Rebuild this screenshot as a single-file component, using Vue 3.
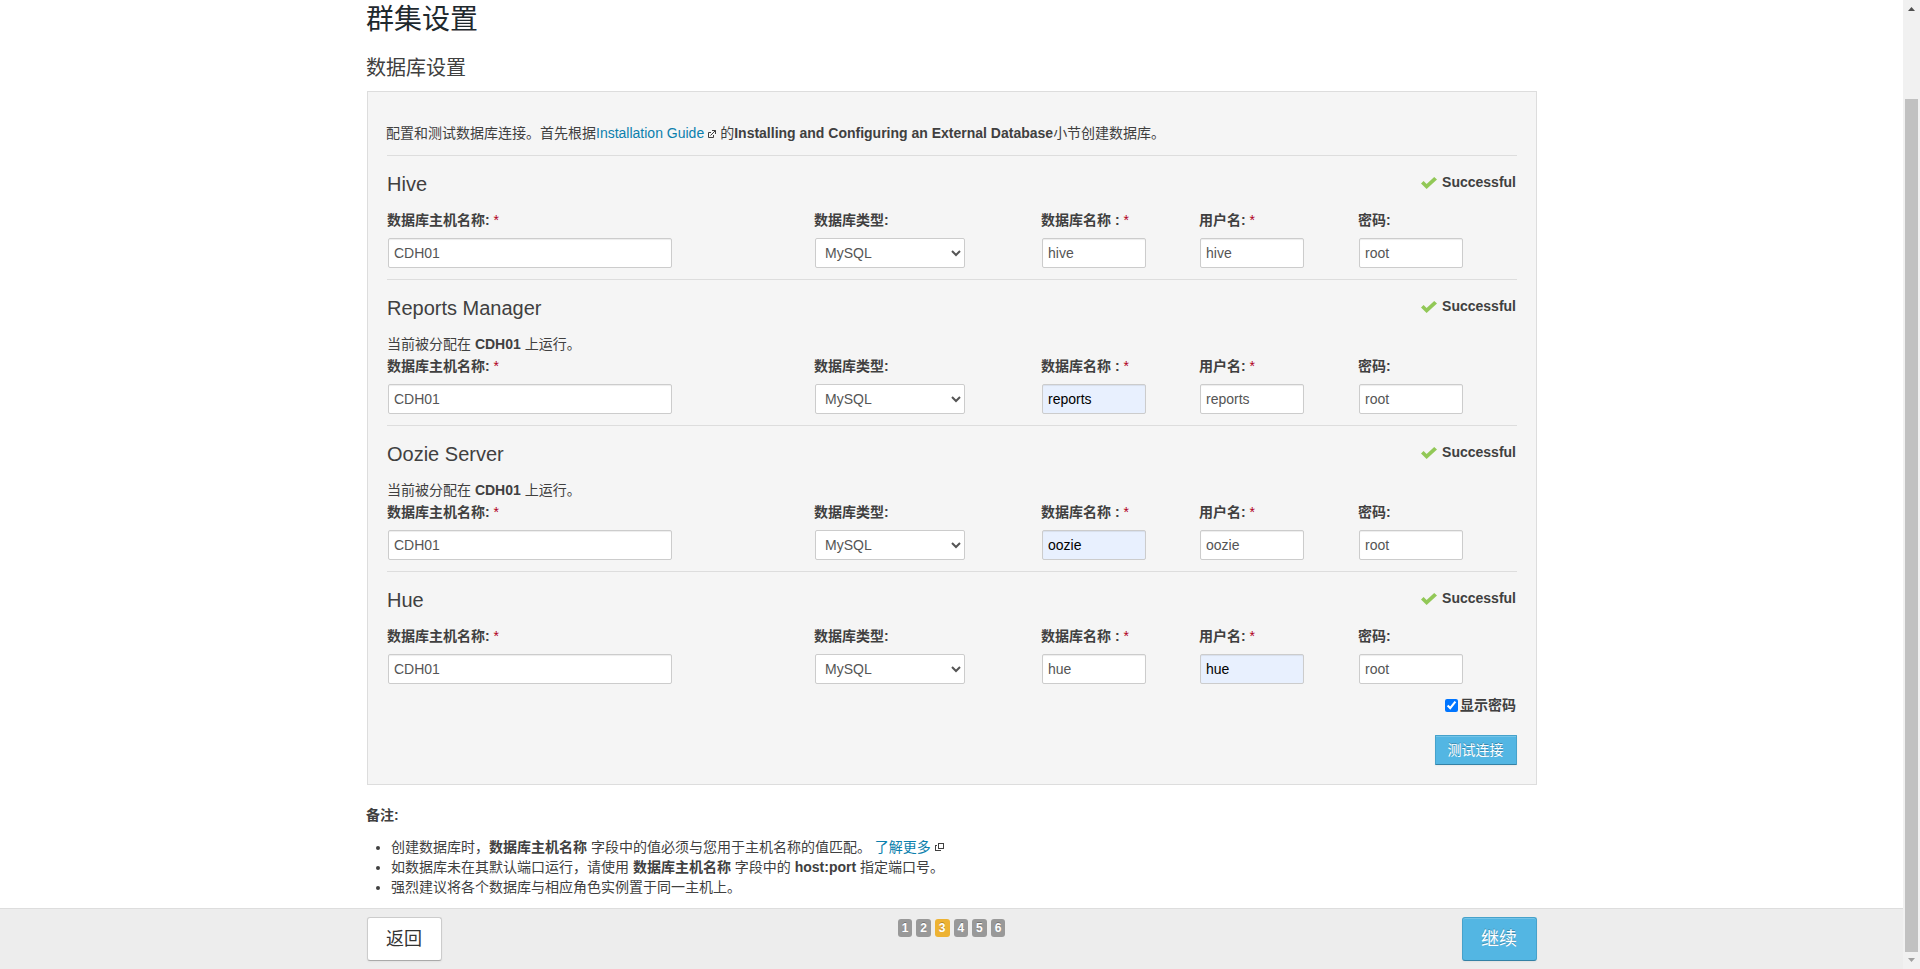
<script setup>
import { ref } from 'vue'

const showPassword = ref(true)
const steps = [1, 2, 3, 4, 5, 6]
const services = [
  { title: 'Hive', assigned: false, name: 'hive', user: 'hive' },
  { title: 'Reports Manager', assigned: true, name: 'reports', user: 'reports', filled: 'name' },
  { title: 'Oozie Server', assigned: true, name: 'oozie', user: 'oozie', filled: 'name' },
  { title: 'Hue', assigned: false, name: 'hue', user: 'hue', filled: 'user' },
]
</script>

<template>
  <div class="screen">
    <div class="page">
      <main class="content">
        <h1>群集设置</h1>
        <h2>数据库设置</h2>
        <div class="panel">
          <p class="intro">
            配置和测试数据库连接。首先根据<a>Installation Guide</a><svg class="ext" width="8" height="8" viewBox="0 0 8 8"><path d="M3 2.5H.5v5h5V5M2.500 5.500l5-5M4 .5h3.500V4" /></svg>的<b>Installing and Configuring an External Database</b>小节创建数据库。
          </p>
          <section v-for="s in services" :key="s.title" class="service">
            <div class="head">
              <h3>{{ s.title }}</h3>
              <div class="status">
                <svg width="16" height="12" viewBox="0 0 16 12"><path d="M0 6.6 2.6 4l3 3.1L13.2 0 16 2.5 5.6 12Z" /></svg>
                Successful
              </div>
            </div>
            <div v-if="s.assigned" class="assigned">当前被分配在 <b>CDH01</b> 上运行。</div>
            <div class="fields">
              <label class="host"><span>数据库主机名称: <i>*</i></span><input type="text" value="CDH01" /></label>
              <label class="type"><span>数据库类型:</span><select><option>MySQL</option></select></label>
              <label class="name"><span>数据库名称 : <i>*</i></span><input type="text" :class="{ filled: s.filled === 'name' }" :value="s.name" /></label>
              <label class="user"><span>用户名: <i>*</i></span><input type="text" :class="{ filled: s.filled === 'user' }" :value="s.user" /></label>
              <label class="pass"><span>密码:</span><input :type="showPassword ? 'text' : 'password'" value="root" /></label>
            </div>
          </section>
          <label class="show"><input v-model="showPassword" type="checkbox" />显示密码</label>
          <button class="btn primary test">测试连接</button>
        </div>
        <div class="notes">
          <b>备注:</b>
          <ul>
            <li>创建数据库时，<b>数据库主机名称</b> 字段中的值必须与您用于主机名称的值匹配。 <a>了解更多</a><svg class="ext pop" width="9" height="8" viewBox="0 0 9 8"><path d="M3.500 .5h5v5h-5zM2 2.500H.5v5h5V7" /></svg></li>
            <li>如数据库未在其默认端口运行，请使用 <b>数据库主机名称</b> 字段中的 <b>host:port</b> 指定端口号。</li>
            <li>强烈建议将各个数据库与相应角色实例置于同一主机上。</li>
          </ul>
        </div>
      </main>
      <footer>
        <div class="bar">
          <button class="btn large">返回</button>
          <div class="steps"><span v-for="n in steps" :key="n" :class="{ on: n === 3 }">{{ n }}</span></div>
          <button class="btn large primary">继续</button>
        </div>
      </footer>
    </div>
    <div class="scroll">
      <svg width="7" height="4" viewBox="0 0 7 4"><path d="M0 4 3.500 0 7 4Z" fill="#505050" /></svg>
      <div class="thumb"></div>
      <svg class="down" width="7" height="4" viewBox="0 0 7 4"><path d="M0 0h7L3.500 4Z" fill="#a0a0a0" /></svg>
    </div>
  </div>
</template>

<style>
html, body { overflow: hidden; }
</style>

<style scoped>
* { box-sizing: border-box; }
.screen {
  display: flex; width: 1920px; height: 969px; overflow: hidden; background: #fff; color: #404040;
  font: 14px/20px "Liberation Sans", "Noto Sans CJK SC", sans-serif;
}
.page { width: 1903px; display: flex; flex-direction: column; }
.content { width: 1170px; margin-left: 367px; flex: 1; }
h1, h2, h3, p, ul { margin: 0; font-weight: 400; }
h1 { height: 36px; margin-left: -1px; font-size: 28px; line-height: 39px; color: #1f292e; }
h2 { height: 55px; margin-left: -1px; padding-top: 12px; font-size: 20px; line-height: 40px; }
.panel {
  height: 694px; padding: 0 19px; display: flex; flex-direction: column;
  background: #f5f5f5; border: 1px solid #ddd;
}
.intro { height: 63px; padding-top: 31px; margin-left: -1px; white-space: nowrap; }
a { color: #0b7fad; }
.ext { margin: 0 4px; fill: none; stroke: #404040; stroke-width: 1; vertical-align: 0; }
.pop { margin: 0 4px; vertical-align: 1px; shape-rendering: crispEdges; }
.service { border-top: 1px solid #ddd; padding-bottom: 11px; }
.head { display: flex; justify-content: space-between; height: 55px; padding: 9px 1px 0 0; }
h3 { font-size: 20px; line-height: 39px; }
.status { display: flex; align-items: center; height: 20px; margin-top: 7px; gap: 5px; font-weight: 700; }
.status svg { fill: #92c857; margin-top: 2px; }
.assigned { height: 20px; margin-bottom: 2px; line-height: 19px; }
.fields { display: grid; grid-template-columns: 427px 227px 158px 159px 104px; padding-left: 1px; }
label span { display: block; height: 27px; margin-left: -1px; line-height: 19px; font-weight: 700; white-space: nowrap; }
i { font-style: normal; font-weight: 400; color: #b00020; }
.fields input, select {
  display: block; height: 30px; width: 104px; margin: 0; padding: 4px 5px; border: 1px solid #ccc; border-radius: 2px;
  background: #fff; color: #555; font: inherit; box-shadow: inset 0 1px 1px rgba(0, 0, 0, .075);
}
.fields .host input { width: 284px; }
.fields select { width: 150px; padding: 4px 5px; box-shadow: none; }
.fields .filled { background: #e8f0fe; color: #000; }
.show { display: flex; align-items: center; justify-content: flex-end; gap: 2px; height: 20px; padding-right: 1px; font-weight: 700; }
.show input { width: 13px; height: 13px; margin: 0; }
.btn {
  font-family: inherit; background: #fff; color: #333; border: 1px solid #ccc; border-bottom-color: #aaa;
  border-radius: 3px; padding: 0; box-shadow: 0 1px 2px rgba(0, 0, 0, .05);
}
.primary {
  background: #53b6e3; color: #fff; border-color: #46a2cb; border-bottom-color: #3481a5;
  text-shadow: 0 -1px 0 rgba(0, 0, 0, .25); box-shadow: inset 0 1px 0 rgba(255, 255, 255, .2), 0 1px 2px rgba(0, 0, 0, .05);
}
.test { align-self: flex-end; width: 82px; height: 30px; margin-top: 20px; padding: 0 1px 2px 0; font-size: 14px; border-radius: 1px; }
.large { width: 75px; height: 44px; padding: 0 1px 4px 0; font-size: 18px; }
.notes { padding-top: 20px; margin-left: -1px; }
ul { padding: 12px 0 0 25px; }
li { white-space: nowrap; }
footer { height: 61px; background: #ededed; border-top: 1px solid #ddd; }
.bar { display: flex; justify-content: space-between; width: 1170px; margin-left: 367px; padding-top: 8px; }
.steps { display: flex; gap: 4px; padding: 2px 1px 0 0; }
.steps span {
  width: 14.6px; height: 18px; border-radius: 3px; background: #999; color: #fff; text-align: center;
  font: 700 12px/18px "Liberation Sans", sans-serif; text-shadow: 0 -1px 0 rgba(0, 0, 0, .25);
}
.steps .on { background: #edb233; }
.scroll { width: 17px; display: flex; flex-direction: column; align-items: center; background: #f1f1f1; padding-top: 7px; }
.thumb { width: 13px; height: 853px; margin-top: 88px; background: #c1c1c1; }
.down { margin-top: 6px; }
</style>
